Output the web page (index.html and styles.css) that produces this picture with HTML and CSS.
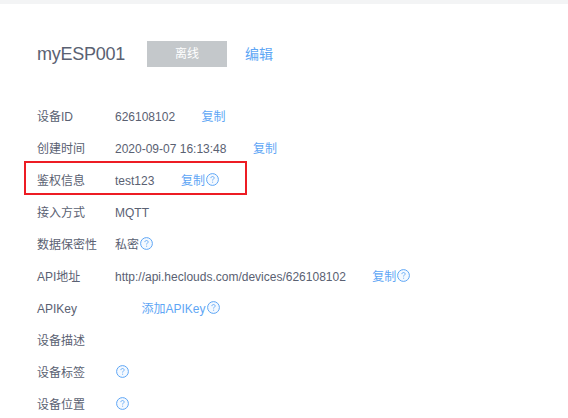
FILE: index.html
```html
<!DOCTYPE html>
<html lang="zh">
<head>
<meta charset="utf-8">
<title>myESP001</title>
<link rel="stylesheet" href="styles.css">
</head>
<body>
<svg class="defs" width="0" height="0" aria-hidden="true">
  <symbol id="help" viewBox="0 0 13 13">
    <circle cx="6.5" cy="6.5" r="5.9" fill="#f4f9ff" stroke="#5ea6f5" stroke-width="1"/>
    <path d="M4.9 5.1c0-1 .7-1.6 1.6-1.6s1.6.6 1.6 1.4c0 1.2-1.5 1.3-1.5 2.6" fill="none" stroke="#5ea6f5" stroke-width=".9"/>
    <path d="M6.6 8.7v1" fill="none" stroke="#5ea6f5" stroke-width=".9"/>
  </symbol>
</svg>
<div class="topbar"></div>
<main class="page">
  <header class="head">
    <h1 class="title">myESP001</h1>
    <span class="status">离线</span>
    <a class="edit">编辑</a>
  </header>
  <section class="rows">
    <div class="row"><span class="label">设备ID</span><span class="value">626108102</span><a class="link copy">复制</a></div>
    <div class="row"><span class="label">创建时间</span><span class="value">2020-09-07 16:13:48</span><a class="link copy">复制</a></div>
    <div class="row highlighted"><span class="label">鉴权信息</span><span class="value">test123</span><a class="link copy">复制</a><svg class="help"><use href="#help"/></svg></div>
    <div class="row"><span class="label">接入方式</span><span class="value">MQTT</span></div>
    <div class="row"><span class="label">数据保密性</span><span class="value">私密</span><svg class="help"><use href="#help"/></svg></div>
    <div class="row"><span class="label">API地址</span><span class="value">http://api.heclouds.com/devices/626108102</span><a class="link copy">复制</a><svg class="help"><use href="#help"/></svg></div>
    <div class="row"><span class="label">APIKey</span><a class="link add-key">添加APIKey</a><svg class="help"><use href="#help"/></svg></div>
    <div class="row"><span class="label">设备描述</span></div>
    <div class="row"><span class="label">设备标签</span><svg class="help"><use href="#help"/></svg></div>
    <div class="row"><span class="label">设备位置</span><svg class="help"><use href="#help"/></svg></div>
  </section>
</main>
</body>
</html>
```

FILE: styles.css
```css
*, *::after { box-sizing: border-box; }
html, body { margin: 0; padding: 0; }
body {
  width: 568px;
  height: 418px;
  overflow: hidden;
  background: #fff;
  color: #5a6172;
  font-family: "Liberation Sans", "Noto Sans CJK SC", sans-serif;
  font-size: 12px;
}
.defs { display: block; height: 0; }
.topbar { height: 4px; background: #f3f4f5; }
.page { padding: 37px 0 0 37px; }
.head { display: flex; align-items: center; height: 26px; }
.title {
  margin: 0;
  width: 110px;
  font-size: 18px;
  font-weight: 400;
  line-height: 26px;
  letter-spacing: -0.25px;
  color: #5a6172;
}
.status {
  width: 80px;
  height: 26px;
  line-height: 26px;
  text-align: center;
  background: #c4c8cb;
  color: #fff;
}
.edit { margin: 0 0 2px 18px; font-size: 14px; color: #5ea6f5; }
.rows { margin-top: 33px; }
.row {
  position: relative;
  display: flex;
  align-items: baseline;
  height: 32px;
  padding-top: 2px;
  line-height: 31px;
}
.highlighted::after {
  content: "";
  position: absolute;
  left: -13px;
  top: -3px;
  width: 223px;
  height: 34px;
  border: 2px solid #ed1c24;
}
.label { width: 78px; flex: none; }
.value { flex: none; }
.link { color: #5ea6f5; }
.copy { margin-left: 26.5px; }
.add-key { margin-left: 26.5px; }
.help { width: 13px; height: 13px; flex: none; margin: 0 0 3px 1px; align-self: center; }
```
